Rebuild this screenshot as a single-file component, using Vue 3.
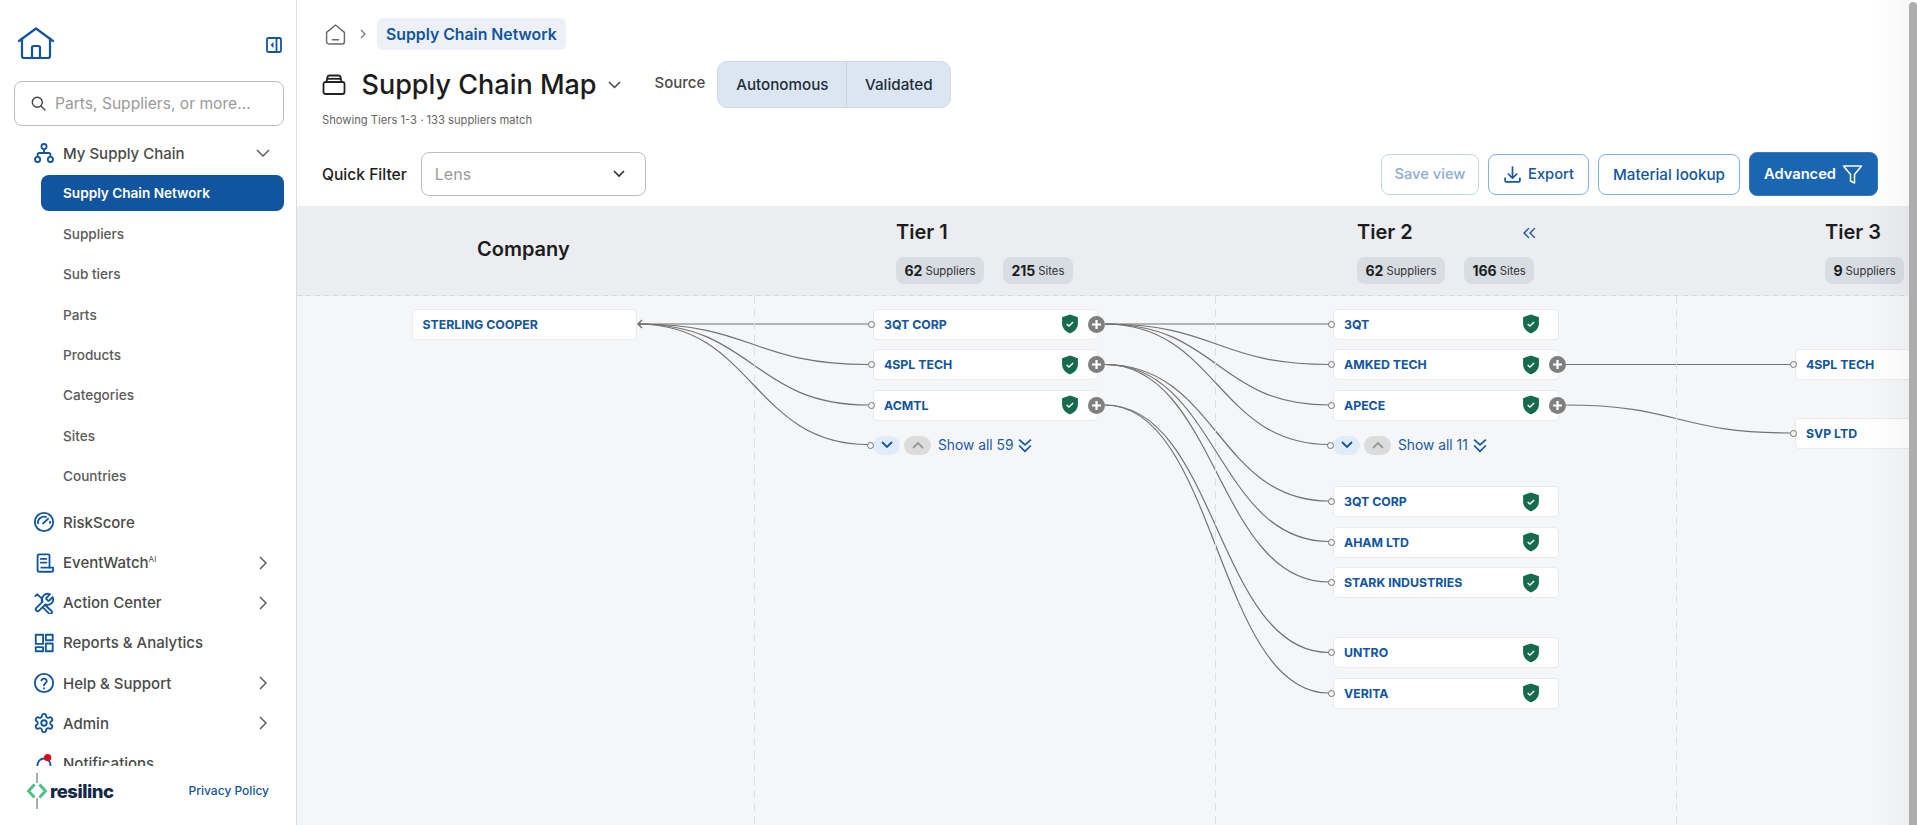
<script setup>
const subItems = ['Supply Chain Network', 'Suppliers', 'Sub tiers', 'Parts', 'Products', 'Categories', 'Sites', 'Countries']

const navItems = [
  { label: 'RiskScore', paths: ['M22 12a10 10 0 1 1-20 0 10 10 0 0 1 20 0z', 'M5.5 13.5a6.5 6.5 0 0 1 8.5-7', 'M11 13.5l5.5-5', 'M18.5 11.5v1.5'] },
  { label: 'EventWatch', ai: true, arrow: true, paths: ['M5 19V4a1.5 1.5 0 0 1 1.5-1.5h10A1.5 1.5 0 0 1 18 4v13', 'M8.5 7.5h6M8.5 11.5h6', 'M9 17h13v2.5a2 2 0 0 1-2 2H7a2 2 0 0 1-2-2'] },
  { label: 'Action Center', arrow: true, paths: ['M14.7 6.3a1 1 0 0 0 0 1.4l1.6 1.6a1 1 0 0 0 1.4 0l3.77-3.77a6 6 0 0 1-7.94 7.94l-6.91 6.91a2.12 2.12 0 0 1-3-3l6.91-6.91a6 6 0 0 1 7.94-7.94z', 'M2.5 4.5 4.5 2.5 9.5 7v2.5', 'M13.5 14.5l7 6.5a2 2 0 0 1-3 2.5l-6.5-6.5'] },
  { label: 'Reports & Analytics', paths: ['M3 3h8v10H3z', 'M14 3h7.5v6H14z', 'M3 16.5h8V21H3z', 'M14 12.5h7.5V21H14z'] },
  { label: 'Help & Support', arrow: true, paths: ['M22 12a10 10 0 1 1-20 0 10 10 0 0 1 20 0z', 'M9.2 9.2a3 3 0 0 1 5.8 1c0 2-3 2.4-3 4.3', 'M12 17.6v.3'] },
  { label: 'Admin', arrow: true, paths: ['M12.22 2h-.44a2 2 0 0 0-2 2v.18a2 2 0 0 1-1 1.73l-.43.25a2 2 0 0 1-2 0l-.15-.08a2 2 0 0 0-2.73.73l-.22.38a2 2 0 0 0 .73 2.73l.15.1a2 2 0 0 1 1 1.72v.51a2 2 0 0 1-1 1.74l-.15.09a2 2 0 0 0-.73 2.73l.22.38a2 2 0 0 0 2.73.73l.15-.08a2 2 0 0 1 2 0l.43.25a2 2 0 0 1 1 1.73V20a2 2 0 0 0 2 2h.44a2 2 0 0 0 2-2v-.18a2 2 0 0 1 1-1.73l.43-.25a2 2 0 0 1 2 0l.15.08a2 2 0 0 0 2.73-.73l.22-.39a2 2 0 0 0-.73-2.73l-.15-.08a2 2 0 0 1-1-1.74v-.5a2 2 0 0 1 1-1.74l.15-.09a2 2 0 0 0 .73-2.73l-.22-.38a2 2 0 0 0-2.73-.73l-.15.08a2 2 0 0 1-2 0l-.43-.25a2 2 0 0 1-1-1.73V4a2 2 0 0 0-2-2z', 'M15 12a3 3 0 1 1-6 0 3 3 0 0 1 6 0z'] },
  { label: 'Notifications', dot: true, paths: ['M5 20v-7a7 7 0 0 1 14 0v7', 'M3 20h18'] }
]

const tierHead = [
  { name: 'Tier 1', suppliers: 62, sites: 215 },
  { name: 'Tier 2', suppliers: 62, sites: 166, collapse: true },
  { name: 'Tier 3', suppliers: 9, last: true }
]

const tier1 = [
  { name: '3QT CORP', plus: true },
  { name: '4SPL TECH', plus: true },
  { name: 'ACMTL', plus: true }
]

const tier2 = [
  { name: '3QT' },
  { name: 'AMKED TECH', plus: true },
  { name: 'APECE', plus: true },
  { show: 'Show all 11' },
  { name: '3QT CORP', cls: 'gap-md' },
  { name: 'AHAM LTD' },
  { name: 'STARK INDUSTRIES' },
  { name: 'UNTRO', cls: 'gap-lg' },
  { name: 'VERITA' }
]

// page coordinates, the svg viewBox starts where the canvas starts
const curve = (x1, y1, x2, y2) => {
  const mid = (x1 + x2) / 2
  return `M${x1} ${y1}C${mid} ${y1} ${mid} ${y2} ${x2} ${y2}`
}

const edges = [
  ...[324.5, 365, 405.5, 445].map(y => curve(638, 324.5, 868, y)),
  ...[324.5, 365, 405.5, 445].map(y => curve(1105, 324.5, 1329, y)),
  ...[501.5, 542, 582.5].map(y => curve(1105, 365, 1329, y)),
  ...[653, 693.5].map(y => curve(1105, 405.5, 1329, y)),
  curve(1566, 365, 1790, 365),
  curve(1566, 405.5, 1790, 433.5)
]
</script>

<template>
  <div class="page">
    <aside class="sidebar">
      <div class="side-top">
        <svg class="home-logo" width="36" height="33" viewBox="0 0 36 33" fill="none" stroke="#1155a0" stroke-width="2.2" stroke-linecap="round" stroke-linejoin="round">
          <path d="M1 14 18 1.5 35 14" />
          <path d="M4 11.5V29a2 2 0 0 0 2 2h24a2 2 0 0 0 2-2V11.5" />
          <path d="M14 31V20.5a1.5 1.5 0 0 1 1.5-1.5h5a1.5 1.5 0 0 1 1.5 1.5V31" />
        </svg>
        <svg class="collapse-icon" width="16" height="16" viewBox="0 0 16 16" fill="none" stroke="#1155a0" stroke-width="1.8">
          <rect x="1" y="1" width="14" height="14" rx="1.5" />
          <path d="M10.5 1v14" />
          <path d="M7.5 5v6L4.5 8z" fill="#1155a0" stroke="none" />
        </svg>
      </div>

      <div class="search">
        <svg width="15" height="15" viewBox="0 0 15 15" fill="none" stroke="#444" stroke-width="1.4" stroke-linecap="round">
          <circle cx="6.3" cy="6.3" r="5" />
          <path d="M10 10l4 4" />
        </svg>
        <span>Parts, Suppliers, or more...</span>
      </div>

      <nav class="nav">
        <div class="nav-row">
          <svg class="nav-icon" viewBox="0 0 24 24" fill="none" stroke="#1155a0" stroke-width="2">
            <circle cx="12" cy="5" r="2.8" />
            <circle cx="5" cy="19" r="2.8" />
            <circle cx="19" cy="19" r="2.8" />
            <path d="M12 8v4M5 16v-2a2 2 0 0 1 2-2h10a2 2 0 0 1 2 2v2" />
          </svg>
          <span class="nav-label">My Supply Chain</span>
          <svg class="nav-arrow" width="14" height="14" viewBox="0 0 14 14" fill="none" stroke="#555" stroke-width="1.4">
            <path d="M1 4l6 6 6-6" />
          </svg>
        </div>
        <ul class="sub-list">
          <li v-for="(item, i) in subItems" :key="item" class="sub-item">
            <a class="sub-link" :class="{ active: i === 0 }">{{ item }}</a>
          </li>
        </ul>
        <div v-for="item in navItems" :key="item.label" class="nav-row">
          <svg class="nav-icon" viewBox="0 0 24 24" fill="none" stroke="#1155a0" stroke-width="2" stroke-linecap="round" stroke-linejoin="round">
            <path v-for="d in item.paths" :key="d" :d="d" />
            <circle v-if="item.dot" cx="16" cy="5" r="4" fill="#d0101c" stroke="none" />
          </svg>
          <span class="nav-label">{{ item.label }}<sup v-if="item.ai">AI</sup></span>
          <svg v-if="item.arrow" class="nav-arrow" width="14" height="14" viewBox="0 0 14 14" fill="none" stroke="#555" stroke-width="1.4">
            <path d="M4 1l6 6-6 6" />
          </svg>
        </div>
      </nav>

      <div class="side-foot">
        <div class="brand">
          <svg width="22" height="36" viewBox="0 0 22 36" fill="none">
            <path d="M10 0v10M10 25v11" stroke="#1d3150" stroke-width="0.8" />
            <path d="M7.5 11.5 1.5 18l6 6.5M12.5 11.5l6 6.5-6 6.5" stroke="#4fc08d" stroke-width="3" />
          </svg>
          <span>resilinc</span>
        </div>
        <a class="privacy">Privacy Policy</a>
      </div>
    </aside>

    <main class="main">
      <section class="top">
        <div class="crumbs">
          <svg class="crumb-home" width="21" height="21" viewBox="0 0 20 20" fill="none" stroke="#6a6a6a" stroke-width="1.4" stroke-linejoin="round" stroke-linecap="round">
            <path d="M1.5 8 10 1l8.5 7v9a2 2 0 0 1-2 2h-13a2 2 0 0 1-2-2z" />
            <path d="M7 15h6" />
          </svg>
          <svg class="crumb-sep" width="7" height="10" viewBox="0 0 7 10" fill="none" stroke="#777" stroke-width="1.2">
            <path d="M1 1l4 4-4 4" />
          </svg>
          <span class="crumb-chip">Supply Chain Network</span>
        </div>

        <div class="title-row">
          <svg class="title-icon" width="24" height="21" viewBox="0 0 24 21" fill="none" stroke="#222" stroke-width="1.8" stroke-linejoin="round">
            <path d="M1.5 10a2 2 0 0 1 2-2h17a2 2 0 0 1 2 2v8a2 2 0 0 1-2 2h-17a2 2 0 0 1-2-2z" />
            <path d="M4.5 8l1-5a2 2 0 0 1 2-1.5h9a2 2 0 0 1 2 1.5l1 5" />
            <path d="M5 4.8h14" />
          </svg>
          <h1>Supply Chain Map</h1>
          <svg class="title-arrow" width="13" height="8" viewBox="0 0 13 8" fill="none" stroke="#444" stroke-width="1.5">
            <path d="M1 1l5.5 5.5L12 1" />
          </svg>
          <span class="source-label">Source</span>
          <div class="segmented">
            <button class="seg seg-auto">Autonomous</button>
            <button class="seg seg-valid">Validated</button>
          </div>
        </div>

        <p class="match-text">Showing Tiers 1-3 · 133 suppliers match</p>

        <div class="filter-row">
          <div class="filter-left">
            <span class="filter-label">Quick Filter</span>
            <div class="lens-select">
              <span>Lens</span>
              <svg width="12" height="8" viewBox="0 0 12 8" fill="none" stroke="#333" stroke-width="1.7">
                <path d="M1 1l5 5 5-5" />
              </svg>
            </div>
          </div>
          <div class="actions">
            <button class="btn btn-save">Save view</button>
            <button class="btn btn-export">
              <svg width="19" height="19" viewBox="0 0 18 18" fill="none" stroke="#1155a0" stroke-width="1.6" stroke-linecap="round" stroke-linejoin="round">
                <path d="M9 2v10M5 8.5 9 12.5l4-4" />
                <path d="M2 12.5V15a1 1 0 0 0 1 1h12a1 1 0 0 0 1-1v-2.5" />
              </svg>
              Export
            </button>
            <button class="btn btn-lookup">Material lookup</button>
            <button class="btn btn-advanced">
              Advanced
              <svg width="21" height="21" viewBox="0 0 21 21" fill="none" stroke="#fff" stroke-width="1.5" stroke-linejoin="round">
                <path d="M1.5 2h18l-7 8.5V19l-4-2v-6.5z" />
              </svg>
            </button>
          </div>
        </div>
      </section>

      <section class="board">
        <div class="tier-head">
          <div class="head-col company-head">Company</div>
          <div v-for="tier in tierHead" :key="tier.name" class="head-col" :class="{ 'head-last': tier.last }">
            <div class="tier-title">
              <span>{{ tier.name }}</span>
              <svg v-if="tier.collapse" class="tier-collapse" width="13" height="12" viewBox="0 0 12 11" fill="none" stroke="#1155a0" stroke-width="1.3">
                <path d="M5.5 1 1 5.5 5.5 10M11 1 6.5 5.5 11 10" />
              </svg>
            </div>
            <div class="pills">
              <span class="pill"><b>{{ tier.suppliers }}</b> Suppliers</span>
              <span v-if="tier.sites" class="pill"><b>{{ tier.sites }}</b> Sites</span>
            </div>
          </div>
        </div>

        <div class="canvas">
          <svg class="edges" viewBox="297 296.5 1612 529" width="1612" height="529" fill="none" stroke="#727272" stroke-width="1.2">
            <path v-for="d in edges" :key="d" :d="d" />
            <path d="M642 320.5 638 324.5 642 328.5" stroke-width="1.5" />
          </svg>

          <div class="col col-company">
            <div class="node"><span class="node-name">STERLING COOPER</span></div>
          </div>

          <div class="col">
            <div v-for="n in tier1" :key="n.name" class="node anchored">
              <span class="node-name">{{ n.name }}</span>
              <svg class="shield" width="20" height="20" viewBox="0 0 18 19">
                <path d="M9 .5l7.5 2.5v6c0 5-4 8-7.5 9.5C5.5 17 1.5 14 1.5 9V3z" fill="#176b4d" />
                <path d="M5.8 9.5 8 11.5l4-4" fill="none" stroke="#fff" stroke-width="1.3" />
              </svg>
              <span class="plus-btn">
                <svg width="11" height="11" viewBox="0 0 11 11" stroke="#fff" stroke-width="2.2"><path d="M5.5 1v9M1 5.5h9" /></svg>
              </span>
            </div>
            <div class="show-row anchored">
              <span class="page-btn page-down">
                <svg width="12" height="8" viewBox="0 0 12 8" fill="none" stroke="#1155a0" stroke-width="1.8"><path d="M1 1l5 5 5-5" /></svg>
              </span>
              <span class="page-btn page-up">
                <svg width="12" height="8" viewBox="0 0 12 8" fill="none" stroke="#999" stroke-width="1.8"><path d="M1 7l5-5 5 5" /></svg>
              </span>
              <span class="show-all">Show all 59</span>
              <svg width="14" height="15" viewBox="0 0 13 14" fill="none" stroke="#1155a0" stroke-width="1.6"><path d="M1 1.5l5.5 5 5.5-5M1 7l5.5 5.5L12 7" /></svg>
            </div>
          </div>

          <div class="col col-tier2">
            <template v-for="n in tier2" :key="n.name || n.show">
              <div v-if="n.show" class="show-row anchored">
                <span class="page-btn page-down">
                  <svg width="12" height="8" viewBox="0 0 12 8" fill="none" stroke="#1155a0" stroke-width="1.8"><path d="M1 1l5 5 5-5" /></svg>
                </span>
                <span class="page-btn page-up">
                  <svg width="12" height="8" viewBox="0 0 12 8" fill="none" stroke="#999" stroke-width="1.8"><path d="M1 7l5-5 5 5" /></svg>
                </span>
                <span class="show-all">{{ n.show }}</span>
                <svg width="14" height="15" viewBox="0 0 13 14" fill="none" stroke="#1155a0" stroke-width="1.6"><path d="M1 1.5l5.5 5 5.5-5M1 7l5.5 5.5L12 7" /></svg>
              </div>
              <div v-else class="node anchored" :class="n.cls">
                <span class="node-name">{{ n.name }}</span>
                <svg class="shield" width="20" height="20" viewBox="0 0 18 19">
                  <path d="M9 .5l7.5 2.5v6c0 5-4 8-7.5 9.5C5.5 17 1.5 14 1.5 9V3z" fill="#176b4d" />
                  <path d="M5.8 9.5 8 11.5l4-4" fill="none" stroke="#fff" stroke-width="1.3" />
                </svg>
                <span v-if="n.plus" class="plus-btn">
                  <svg width="11" height="11" viewBox="0 0 11 11" stroke="#fff" stroke-width="2.2"><path d="M5.5 1v9M1 5.5h9" /></svg>
                </span>
              </div>
            </template>
          </div>

          <div class="col col-tier3">
            <div class="node anchored"><span class="node-name">4SPL TECH</span></div>
            <div class="node anchored svp"><span class="node-name">SVP LTD</span></div>
          </div>
        </div>
      </section>
      <div class="edge-shade"></div>
    </main>

    <div class="scrollbar"></div>
  </div>
</template>

<style>
html, body {
  margin: 0;
  overflow: hidden;
  background: #fff;
}
</style>

<style scoped>
.page {
  display: flex;
  height: 825px;
  overflow: hidden;
  font-family: Inter, "Noto Sans", sans-serif;
  color: #1c1c1c;
}

.sidebar {
  width: 296px;
  flex: none;
  display: flex;
  flex-direction: column;
  border-right: 1px solid #dcdcdc;
  background: #fff;
}

.side-top {
  display: flex;
  align-items: center;
  justify-content: space-between;
  height: 33px;
  padding: 27px 14px 0 18px;
}

.home-logo {
  display: block;
}

.collapse-icon {
  margin-top: 2px;
}

.search {
  display: flex;
  align-items: center;
  gap: 9px;
  height: 45px;
  margin: 21px 12px 0 14px;
  padding-left: 16px;
  border: 1px solid #bdbdbd;
  border-radius: 8px;
  font-size: 15.6px;
  color: #9b9b9b;
  box-sizing: border-box;
}

.nav {
  height: 633px;
  margin-top: 7px;
  overflow: hidden;
}

.nav-row {
  display: flex;
  align-items: center;
  height: 40.2px;
  padding-left: 33px;
  padding-right: 26px;
}

.sub-list + .nav-row {
  margin-top: 6px;
}

.nav-icon {
  width: 22px;
  height: 22px;
  flex: none;
}

.nav-label {
  margin-left: 8px;
  flex: 1;
  font-size: 15px;
  font-weight: 500;
  color: #4a4a4a;
}

.nav-label sup {
  font-size: 8px;
  font-weight: 400;
  vertical-align: 6px;
  line-height: 0;
}

.sub-list {
  list-style: none;
  margin: 0;
  padding: 0;
}

.sub-item {
  display: flex;
  align-items: center;
  height: 40.4px;
  margin: 0 12px 0 41px;
}

.sub-link {
  display: flex;
  align-items: center;
  width: 100%;
  height: 36px;
  padding-left: 22px;
  font-size: 13.6px;
  font-weight: 500;
  color: #5a5a5a;
  box-sizing: border-box;
}

.sub-link.active {
  background: #1155a0;
  border-radius: 8px;
  font-weight: 600;
  color: #fff;
}

.side-foot {
  flex: 1;
  display: flex;
  align-items: center;
  justify-content: space-between;
  padding: 0 27px 10px 27px;
}

.brand {
  display: flex;
  align-items: center;
  gap: 1px;
  font-size: 18.5px;
  font-weight: 800;
  letter-spacing: -0.5px;
  color: #14284b;
}

.privacy {
  font-size: 12px;
  font-weight: 500;
  color: #1155a0;
}

.main {
  position: relative;
  flex: 1;
  min-width: 0;
  display: flex;
  flex-direction: column;
}

.edge-shade {
  position: absolute;
  top: 0;
  right: 0;
  bottom: 0;
  width: 40px;
  z-index: 2;
  pointer-events: none;
  background: linear-gradient(to right, rgba(0, 0, 0, 0), rgba(0, 0, 0, 0.03));
}

.top {
  height: 206px;
  padding: 18px 31px 0 26px;
  box-sizing: border-box;
}

.crumbs {
  display: flex;
  align-items: center;
  height: 32px;
}

.crumb-home {
  margin-left: 2px;
}

.crumb-sep {
  margin: 0 10px 0 14px;
}

.crumb-chip {
  display: flex;
  align-items: center;
  height: 32px;
  padding: 0 9px;
  background: #edf1f7;
  border-radius: 6px;
  font-size: 15.8px;
  font-weight: 600;
  color: #1155a0;
}

.title-row {
  display: flex;
  align-items: center;
  height: 47px;
  margin-top: 11px;
}

.title-row h1 {
  margin: 0 0 0 15.5px;
  font-size: 27px;
  font-weight: 500;
  color: #1c1c1c;
}

.title-icon {
  margin-left: -1px;
}

.title-arrow {
  margin-left: 11px;
}

.source-label {
  margin-left: 34px;
  font-size: 15px;
  font-weight: 500;
  color: #4a4a4a;
  position: relative;
  top: -2px;
}

.segmented {
  display: flex;
  height: 47px;
  margin-left: 12px;
  background: #dbe6f2;
  border: 1px solid #d2dae4;
  border-radius: 10px;
  box-sizing: border-box;
}

.seg {
  padding: 0;
  border: 0;
  background: none;
  font: 500 15.2px Inter, sans-serif;
  color: #222c38;
}

.seg-auto {
  width: 129px;
  border-right: 1px solid #cdd6e0;
}

.seg-valid {
  width: 103px;
}

.match-text {
  margin: 5px 0 0 -1px;
  font-size: 11.2px;
  line-height: 14px;
  color: #666;
}

.filter-row {
  display: flex;
  align-items: center;
  justify-content: space-between;
  height: 44px;
  margin-top: 25px;
}

.filter-left {
  display: flex;
  align-items: center;
  gap: 14px;
  margin-left: -1px;
}

.filter-label {
  font-size: 15.6px;
  font-weight: 500;
}

.lens-select {
  display: flex;
  align-items: center;
  justify-content: space-between;
  width: 225px;
  height: 44px;
  padding: 0 20px 0 13px;
  border: 1px solid #bdbdbd;
  border-radius: 8px;
  font-size: 16px;
  color: #999;
  box-sizing: border-box;
}

.actions {
  display: flex;
  align-items: center;
  gap: 9px;
}

.btn {
  display: flex;
  align-items: center;
  justify-content: center;
  gap: 6px;
  height: 41px;
  padding: 0;
  background: #fff;
  border: 1px solid #7fb2e8;
  border-radius: 8px;
  font: 500 14.7px Inter, sans-serif;
  color: #1155a0;
  box-sizing: border-box;
}

.btn-save {
  width: 98px;
  border-color: #bcd8f5;
  color: #8eaccf;
}

.btn-export {
  width: 101px;
}

.btn-lookup {
  width: 142px;
  font-size: 15.2px;
}

.btn-advanced {
  width: 129px;
  height: 44px;
  background: #1b66b3;
  border-color: #3a7abf;
  font-weight: 600;
  color: #fff;
}

.board {
  flex: 1;
  display: flex;
  flex-direction: column;
  min-height: 0;
  overflow: hidden;
}

.tier-head {
  display: grid;
  grid-template-columns: 458px 461px 461px 232px;
  height: 90px;
  flex: none;
  background:
    repeating-linear-gradient(to right, #d6d8dd 0 5px, transparent 5px 9px) left bottom / 100% 1px no-repeat,
    #ecedf1;
}

.head-col {
  padding: 14px 0 0 141px;
  min-width: 0;
}

.company-head {
  padding: 31px 0 0 180px;
  font-size: 20px;
  line-height: 24px;
  font-weight: 600;
}

.head-last {
  padding-left: 148px;
}

.tier-title {
  display: flex;
  align-items: center;
  gap: 110px;
  height: 24px;
  font-size: 20px;
  font-weight: 600;
}

.tier-collapse {
  margin-top: 1px;
}

.pills {
  display: flex;
  gap: 19px;
  margin-top: 13px;
}

.pill {
  display: flex;
  align-items: center;
  gap: 3px;
  height: 27px;
  padding: 0 8.5px;
  background: #d8dce3;
  border-radius: 8px;
  font-size: 11.3px;
  color: #333;
  white-space: nowrap;
}

.pill b {
  font-size: 14px;
  font-weight: 700;
  color: #1c1c1c;
}

.canvas {
  position: relative;
  flex: 1;
  display: grid;
  grid-template-columns: 458px 461px 461px 232px;
  background: #f5f6f8;
}

.edges {
  position: absolute;
  left: 0;
  top: 0;
  z-index: 0;
}

.col {
  position: relative;
  z-index: 1;
  display: flex;
  flex-direction: column;
  gap: 9.5px;
  min-width: 0;
  padding: 12.5px 0 0 118px;
  background: repeating-linear-gradient(to bottom, #dcdee3 0 8px, transparent 8px 13px) right top / 1px 100% no-repeat;
}

.col-company {
  padding-left: 114.5px;
}

.col-tier2 {
  padding-left: 117px;
}

.col-tier3 {
  padding-top: 53px;
  background: none;
}

.node {
  position: relative;
  display: flex;
  align-items: center;
  justify-content: space-between;
  flex: none;
  width: 225px;
  height: 31px;
  padding: 0 17px 0 10px;
  background: #fff;
  border: 1px solid #e9eaee;
  border-radius: 4px;
  box-sizing: border-box;
}

.col-company .node {
  width: 225.5px;
}

.col-tier2 .node {
  width: 226px;
}

.gap-md {
  margin-top: 21.5px;
}

.gap-lg {
  margin-top: 29.5px;
}

.svp {
  margin-top: 28px;
}

.anchored::before {
  content: "";
  position: absolute;
  left: -6px;
  top: 50%;
  width: 5px;
  height: 5px;
  margin-top: -3.5px;
  border: 1.2px solid #727272;
  border-radius: 50%;
  background: #f5f6f8;
}

.node-name {
  font-size: 12.3px;
  font-weight: 700;
  color: #1155a0;
  white-space: nowrap;
}

.shield {
  display: block;
  flex: none;
}

.plus-btn {
  position: absolute;
  right: -8px;
  top: 50%;
  display: flex;
  align-items: center;
  justify-content: center;
  width: 17px;
  height: 17px;
  margin-top: -8.5px;
  border-radius: 50%;
  background: #7f7f7f;
}

.show-row {
  position: relative;
  display: flex;
  align-items: center;
  flex: none;
  height: 20px;
  margin-top: 5px;
  color: #1a5aa5;
}

.page-btn {
  display: flex;
  align-items: center;
  justify-content: center;
  width: 27px;
  height: 19px;
  border-radius: 10px;
}

.page-down {
  background: #e1ecfb;
}

.page-up {
  margin-left: 4px;
  background: #dcdcdc;
}

.show-all {
  margin: 0 5px 0 7px;
  font-size: 13.8px;
}

.scrollbar {
  width: 8px;
  flex: none;
  margin-top: 2px;
  background: #adadad;
  border-radius: 4px 4px 0 0;
}
</style>
